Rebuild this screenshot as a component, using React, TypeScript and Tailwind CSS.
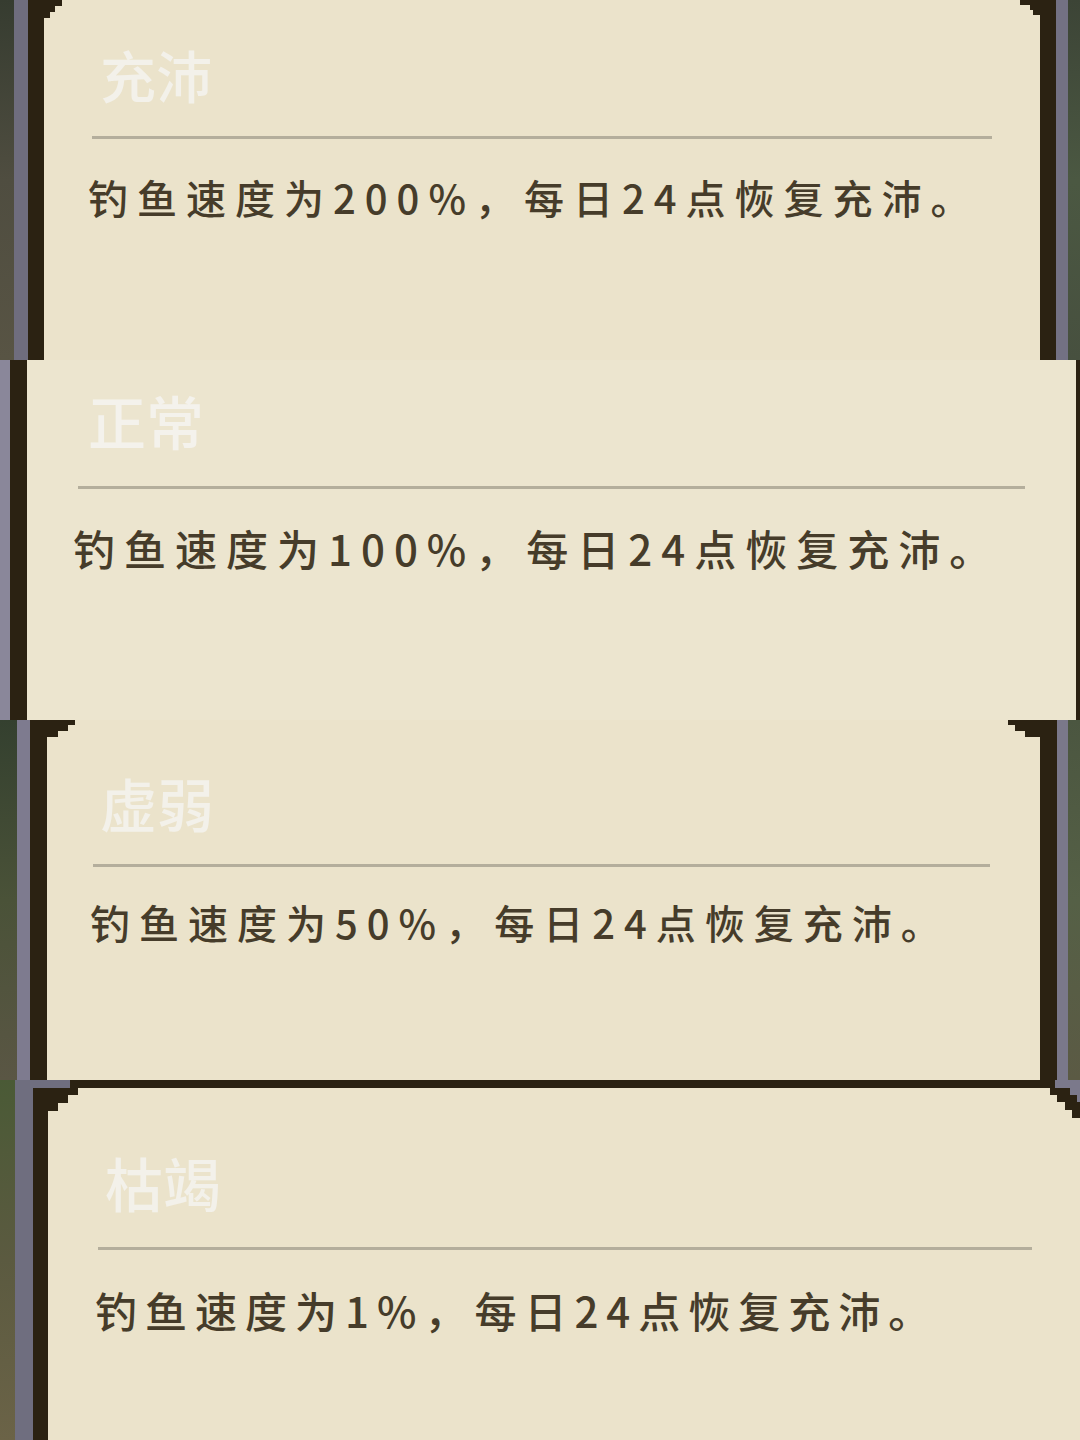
const CJK = "font-['Noto_Sans_CJK_SC','Noto_Sans_CJK_JP',sans-serif]";

const DARK = "#2b2212";
const GRAY = "#7b798b";

function Steps({ rows, side }: { rows: [number, number][]; side: "left" | "right" }) {
  // rows: [width, height] stacked from the top
  const w = Math.max(...rows.map((r) => r[0]));
  const h = rows.reduce((a, r) => a + r[1], 0);
  let y = 0;
  return (
    <svg
      width={w}
      height={h}
      className={`absolute top-0 ${side === "left" ? "left-0" : "right-0"}`}
    >
      {rows.map(([rw, rh], i) => {
        const r = (
          <rect key={i} x={side === "left" ? 0 : w - rw} y={y} width={rw} height={rh} fill={DARK} />
        );
        y += rh;
        return r;
      })}
    </svg>
  );
}

function Divider({ className }: { className: string }) {
  return <div className={`h-[3px] bg-[#b4ae9c] ${className}`} />;
}

export default function App() {
  return (
    <div className={`w-[1080px] flex flex-col ${CJK}`}>
      {/* 充沛 */}
      <div className="flex h-[360px] overflow-hidden">
        <div className="w-[14px] bg-gradient-to-b from-[#363c30] via-[#4f4d40] to-[#585444]" />
        <div className="w-[14px] bg-[#6f6d7e]" />
        <div className="w-[16px] bg-[#2b2212]" />
        <div className="relative flex-1 bg-[#ebe3cb] pt-[46px]">
          <Steps side="left" rows={[[18, 6], [11, 6], [6, 6]]} />
          <Steps side="right" rows={[[20, 5], [10, 5], [7, 5]]} />
          <div className="ml-[56px] text-[56px] leading-none text-[#f3f1ea] font-medium">充沛</div>
          <Divider className="mt-[34px] ml-[48px] mr-[48px]" />
          <div className="mt-[38px] ml-[44px] text-[40px] leading-none tracking-[9px] font-medium text-[#463c2a]">
            钓鱼速度为200%，每日24点恢复充沛。
          </div>
        </div>
        <div className="w-[16px] bg-[#2b2212]" />
        <div className="w-[12px] bg-[#737183]" />
        <div className="w-[12px] bg-gradient-to-b from-[#3c4436] via-[#4b5842] to-[#47503f]" />
      </div>

      {/* 正常 */}
      <div className="flex h-[360px] overflow-hidden">
        <div className="w-[10px] bg-[#8a879a]" />
        <div className="w-[17px] bg-[#2b2212]" />
        <div className="relative flex-1 bg-[#ece5cf] pt-[31px]">
          <div className="ml-[61px] text-[58px] leading-none text-[#f4f2ec] font-medium">正常</div>
          <Divider className="mt-[37px] ml-[51px] mr-[51px]" />
          <div className="mt-[38px] ml-[46px] text-[42px] leading-none tracking-[9px] font-medium text-[#463c2a]">
            钓鱼速度为100%，每日24点恢复充沛。
          </div>
        </div>
        <div className="w-[4px] bg-[#2b2212]" />
      </div>

      {/* 虚弱 */}
      <div className="flex h-[360px] overflow-hidden">
        <div className="w-[17px] bg-gradient-to-b from-[#34402f] via-[#4a5238] to-[#5a5644]" />
        <div className="w-[13px] bg-[#7e7b8f]" />
        <div className="w-[17px] bg-[#2b2212]" />
        <div className="relative flex-1 bg-[#ebe3cb] pt-[54px]">
          <Steps side="left" rows={[[28, 5], [21, 6], [11, 6]]} />
          <Steps side="right" rows={[[32, 5], [25, 6], [15, 6]]} />
          <div className="ml-[53px] text-[57px] leading-none text-[#f3f1ea] font-medium">虚弱</div>
          <Divider className="mt-[33px] ml-[46px] mr-[50px]" />
          <div className="mt-[35px] ml-[43px] text-[40px] leading-none tracking-[9px] font-medium text-[#463c2a]">
            钓鱼速度为50%，每日24点恢复充沛。
          </div>
        </div>
        <div className="w-[17px] bg-[#2b2212]" />
        <div className="w-[11px] bg-[#7a788a]" />
        <div className="w-[12px] bg-gradient-to-b from-[#4b5640] via-[#556046] to-[#5b5a44]" />
      </div>

      {/* 枯竭 */}
      <div className="relative flex h-[360px] overflow-hidden">
        <div className="w-[15px] bg-gradient-to-b from-[#4a5a36] via-[#5b5a40] to-[#6b6347]" />
        <div className="w-[18px] bg-[#6f6e7f]" />
        <div className="flex w-[15px] flex-col">
          <div className="h-[8px] bg-[#6f6e7f]" />
          <div className="flex-1 bg-[#2b2212]" />
        </div>
        <div className="relative flex-1 border-t-[8px] border-[#2b2212] bg-[#ebe3cb] pt-[65px]">
          <div className="absolute -top-[8px] left-0 h-[8px] w-[22px] bg-[#6f6e7f]" />
          <Steps side="left" rows={[[30, 7], [20, 8], [10, 8]]} />
          <div className="ml-[57px] text-[58px] leading-none text-[#f3f1ea] font-medium">枯竭</div>
          <Divider className="mt-[36px] ml-[50px] mr-[48px]" />
          <div className="mt-[39px] ml-[47px] text-[42px] leading-none tracking-[8px] font-medium text-[#463c2a]">
            钓鱼速度为1%，每日24点恢复充沛。
          </div>
        </div>
        <svg width="30" height="40" className="absolute right-0 top-0">
          <rect x="5" y="0" width="25" height="8" fill={GRAY} />
          <rect x="0" y="8" width="20" height="7" fill={DARK} />
          <rect x="20" y="8" width="10" height="7" fill={GRAY} />
          <rect x="7" y="15" width="20" height="7" fill={DARK} />
          <rect x="27" y="15" width="3" height="7" fill={GRAY} />
          <rect x="15" y="22" width="15" height="8" fill={DARK} />
          <rect x="22" y="30" width="8" height="8" fill={DARK} />
        </svg>
      </div>
    </div>
  );
}
